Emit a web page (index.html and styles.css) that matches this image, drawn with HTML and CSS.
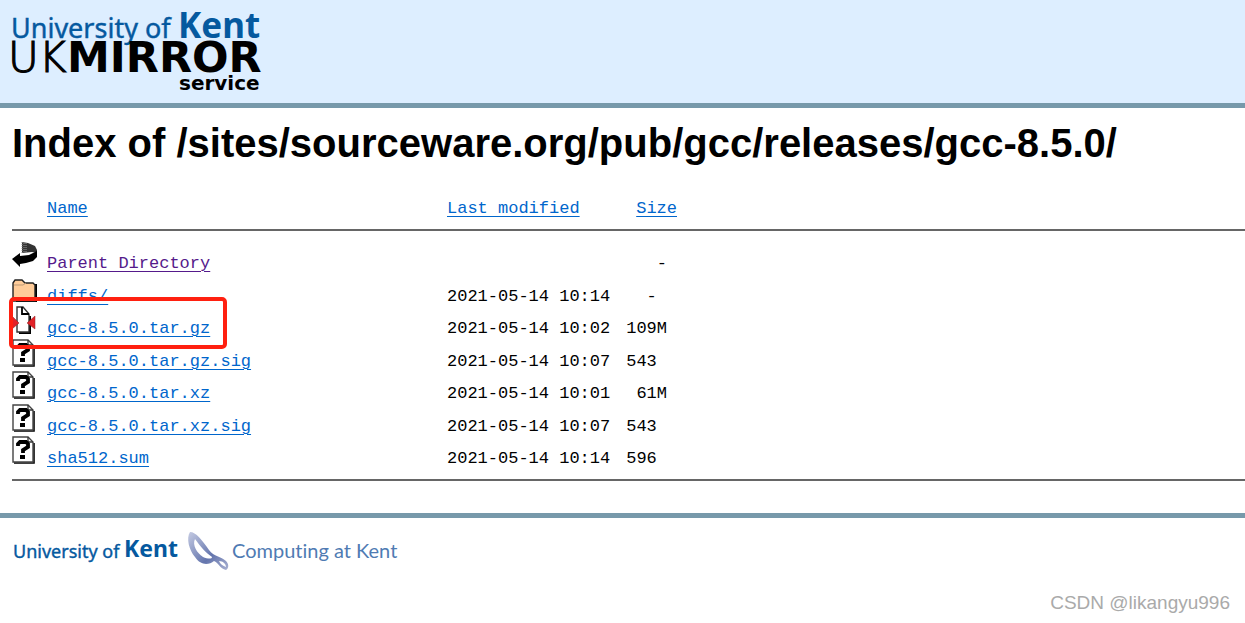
FILE: index.html
```
<!DOCTYPE html>
<html lang="en">
<head>
<meta charset="utf-8">
<title>Index of /sites/sourceware.org/pub/gcc/releases/gcc-8.5.0/</title>
<link rel="stylesheet" href="styles.css">
</head>
<body>
<svg class="defs" aria-hidden="true">
  <symbol id="unknown" viewBox="0 0 25 28">
    <path d="M2 27H22V7" fill="none" stroke="#000" stroke-width="1.6"/>
    <path d="M1 1H16L21 6V26H1Z" fill="#fff" stroke="#444" stroke-width="1.4"/>
    <path d="M16 1V6H21" fill="none" stroke="#333" stroke-width="1.3"/>
    <path d="M6 10V8L8 6H14L16 8V11L11 14V17" fill="none" stroke="#000" stroke-width="3.8"/>
    <path d="M8 19H13V23H8Z"/>
  </symbol>
</svg>
<header class="masthead">
  <a href="#" class="logo-link" aria-label="University of Kent UK Mirror Service">
    <svg class="logo" viewBox="0 0 252 88">
      <text class="kent-text" x="-1" y="32" font-size="27">University of</text>
      <text class="kent-bold" x="166" y="32" font-size="35">Kent</text>
      <text class="mirror-light" x="-4" y="66">UK</text>
      <text class="mirror" x="55" y="66">MIRROR</text>
      <text class="service" x="167" y="84">service</text>
    </svg>
  </a>
</header>
<main class="listing">
  <h1 class="title">Index of /sites/sourceware.org/pub/gcc/releases/gcc-8.5.0/</h1>
  <table class="files">
    <colgroup><col class="c-icon"><col class="c-name"><col class="c-date"><col class="c-size"><col></colgroup>
    <thead>
      <tr><th></th><th><a href="#">Name</a></th><th><a href="#">Last modified</a></th><th class="size"><a href="#">Size</a></th><th></th></tr>
    </thead>
    <tbody>
      <tr class="first">
        <td><svg class="icon" viewBox="0 0 25 28"><path d="M10 1L16 2L23 5L25 9V12L20 11L10 12Z" fill="#333"/><path d="M10 1V12M12 2V11M14 2V11" stroke="#999" stroke-dasharray="1 1"/><path d="M25 10V16L21 20L14 22L8 23V26L0 18L8 12V15L17 14Z"/></svg></td>
        <td><a href="#" class="visited">Parent Directory</a></td><td></td><td class="size">-</td><td></td>
      </tr>
      <tr>
        <td><svg class="icon" viewBox="0 0 25 28"><path d="M4 27H24V10" fill="none" stroke="#000" stroke-width="2"/><path d="M1 9L3 6H10L13 9H21L23 11V27H1Z" fill="#fc9" stroke="#222" stroke-width="1.4"/><path d="M2 11H11L14 9" fill="none" stroke="#b97"/></svg></td>
        <td><a href="#">diffs/</a></td><td>2021-05-14 10:14</td><td class="size">- </td><td></td>
      </tr>
      <tr>
        <td class="marked"><svg class="icon" viewBox="0 0 25 28"><path d="M7 27H18V10" fill="none" stroke="#000" stroke-width="2"/><path d="M5 1H11L17 8V26H5Z" fill="#fff" stroke="#333" stroke-width="1.4"/><path d="M10 1V8H17" fill="none" stroke="#000" stroke-width="1.8"/><path d="M0 10L7 17L0 23ZM23 10L15 17L23 23Z" fill="#e22228" stroke="#822" stroke-width=".5"/></svg><span class="highlight"></span></td>
        <td><a href="#">gcc-8.5.0.tar.gz</a></td><td>2021-05-14 10:02</td><td class="size">109M</td><td></td>
      </tr>
      <tr>
        <td><svg class="icon"><use href="#unknown"/></svg></td>
        <td><a href="#">gcc-8.5.0.tar.gz.sig</a></td><td>2021-05-14 10:07</td><td class="size">543 </td><td></td>
      </tr>
      <tr>
        <td><svg class="icon"><use href="#unknown"/></svg></td>
        <td><a href="#">gcc-8.5.0.tar.xz</a></td><td>2021-05-14 10:01</td><td class="size">61M</td><td></td>
      </tr>
      <tr>
        <td><svg class="icon"><use href="#unknown"/></svg></td>
        <td><a href="#">gcc-8.5.0.tar.xz.sig</a></td><td>2021-05-14 10:07</td><td class="size">543 </td><td></td>
      </tr>
      <tr>
        <td><svg class="icon"><use href="#unknown"/></svg></td>
        <td><a href="#">sha512.sum</a></td><td>2021-05-14 10:14</td><td class="size">596 </td><td></td>
      </tr>
    </tbody>
  </table>
  <hr class="rule">
</main>
<footer class="footer">
  <a href="#" class="logo-link" aria-label="Computing at Kent">
    <svg class="foot-logo" viewBox="0 0 400 44">
      <defs><linearGradient id="swoosh" x1="0" y1="0" x2="1" y2="1"><stop offset="0" stop-color="#c5cbe3"/><stop offset=".6" stop-color="#6475ad"/><stop offset="1" stop-color="#a9b1d2"/></linearGradient></defs>
      <text class="kent-text medium" x="0" y="30" font-size="18">University of</text>
      <text class="kent-bold" x="111" y="29" font-size="23">Kent</text>
      <path fill="url(#swoosh)" fill-rule="evenodd" d="M177 4C183 4 189 12 196 22C201 29 208 28 213 33C216 36 216 40 213 42C207 41 205 34 201 33C196 37 188 38 182 29C176 22 173 10 177 4ZM182 11C179 17 184 25 190 29C195 31 199 31 199 29C193 25 187 18 182 11ZM206 33C207 36 210 38 213 39C213 36 210 33 206 33Z"/>
      <text class="computing" x="219" y="30">Computing at Kent</text>
    </svg>
  </a>
  <span class="watermark">CSDN @likangyu996</span>
</footer>
</body>
</html>
```
FILE: styles.css
```
body { margin: 0; background: #fff; color: #000; font-family: "Liberation Sans", Arial, sans-serif; }
.defs { position: absolute; width: 0; height: 0; }
.masthead { background: #def; border-bottom: 5px solid #79a; padding: 6px 12px 9px; }
.logo-link { display: block; width: fit-content; }
.logo { display: block; width: 252px; height: 88px; overflow: visible; }
.kent-text { font-family: "Noto Sans", sans-serif; fill: #05599f; stroke: #05599f; stroke-width: .4px; }
.kent-bold { font-family: "Noto Sans", sans-serif; font-weight: 700; fill: #05599f; }
.mirror-light { font: 200 42px "DejaVu Sans", sans-serif; stroke: #000; stroke-width: 1.2px; }
.mirror { font: 700 43px "DejaVu Sans", sans-serif; }
.service { font: 700 20px "DejaVu Sans", sans-serif; }
.computing { font: 400 20px Lato, sans-serif; font-variant-ligatures: none; fill: #4f7bb3; }
.listing { padding: 12px 0 0 12px; }
.title { margin: 0; font-size: 40px; line-height: 46px; }
.files { width: 100%; margin-top: 30px; table-layout: fixed; border-collapse: separate; border-spacing: 0; font: 17px/18px "Liberation Mono", monospace; }
.c-icon { width: 35px; }
.c-name { width: 400px; }
.c-date { width: 170px; }
.c-size { width: 60px; }
.files th, .files td { padding: 0; text-align: left; font-weight: 400; vertical-align: bottom; white-space: pre; }
.files th { height: 35px; vertical-align: top; padding-top: 4px; box-sizing: border-box; }
.files thead th { border-bottom: 2px solid #666; }
.files td { height: 32px; }
.files tr:nth-child(even) td { height: 33px; }
.files tr.first td { padding-top: 10px; }
.files .size { text-align: right; }
.files td.size { padding-right: 10px; }
.files a { color: #06c; text-decoration: underline 1px; text-underline-offset: 3px; }
.files a.visited { color: #551a8b; }
.icon { display: block; width: 25px; height: 28px; margin-bottom: 4px; }
.marked { position: relative; }
.highlight { position: absolute; left: -3px; top: -9px; width: 210px; height: 44px; border: 4px solid #ff2010; border-radius: 5px; }
.rule { margin: 11px 0 0; border: 0; height: 2px; background: #666; }
.footer { margin-top: 32px; border-top: 5px solid #79a; padding: 10px 15px 8px 13px; }
.foot-logo { display: block; width: 400px; height: 44px; }
.watermark { display: block; margin-top: 20px; text-align: right; font-size: 19px; line-height: 22px; color: #aaa; }
```
